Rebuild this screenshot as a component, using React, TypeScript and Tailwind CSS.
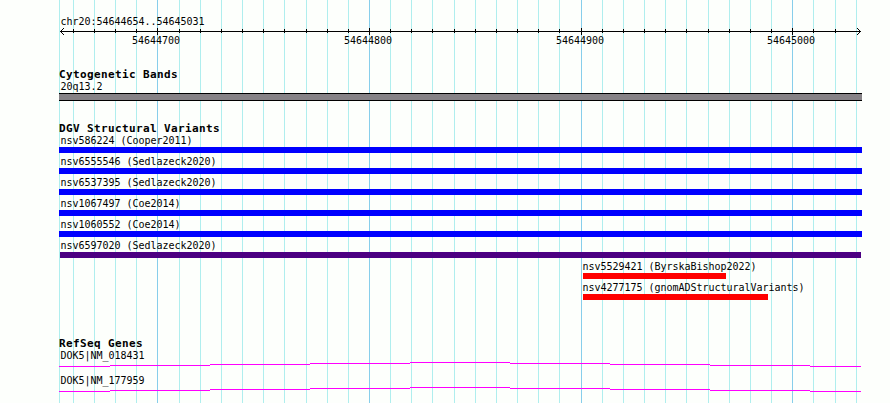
import clsx from "clsx";

interface Variant {
  name: string;
  row: string;
  bar: string;
}

const GRID = [
  59, 73, 94, 115, 136, 157, 179, 200, 221, 242, 263, 284, 306, 327, 348, 369,
  390, 411, 432, 454, 475, 496, 517, 538, 559, 581, 602, 623, 644, 665, 686,
  708, 729, 750, 771, 792, 813, 835, 856,
];

const MAJOR = [157, 369, 581, 792];

const VARIANTS: Variant[] = [
  { name: "nsv586224 (Cooper2011)", row: "ml-[59px]", bar: "w-[803px] bg-[#0000ff]" },
  { name: "nsv6555546 (Sedlazeck2020)", row: "ml-[59px]", bar: "w-[803px] bg-[#0000ff]" },
  { name: "nsv6537395 (Sedlazeck2020)", row: "ml-[59px]", bar: "w-[803px] bg-[#0000ff]" },
  { name: "nsv1067497 (Coe2014)", row: "ml-[59px]", bar: "w-[803px] bg-[#0000ff]" },
  { name: "nsv1060552 (Coe2014)", row: "ml-[59px]", bar: "w-[803px] bg-[#0000ff]" },
  { name: "nsv6597020 (Sedlazeck2020)", row: "ml-[59px]", bar: "ml-px w-[801px] bg-[#4b0082]" },
  { name: "nsv5529421 (ByrskaBishop2022)", row: "ml-[581px]", bar: "ml-[2px] w-[143px] bg-[#ff0000]" },
  { name: "nsv4277175 (gnomADStructuralVariants)", row: "ml-[581px]", bar: "ml-[2px] w-[185px] bg-[#ff0000]" },
];

const GENES = ["DOK5|NM_018431", "DOK5|NM_177959"];

function GridLines() {
  return (
    <svg className="absolute inset-0" width="890" height="403" shapeRendering="crispEdges">
      {GRID.map((x) => (
        <rect
          key={x}
          x={x}
          y={0}
          width={1}
          height={403}
          fill={MAJOR.includes(x) ? "#87ceeb" : "#afeeee"}
        />
      ))}
    </svg>
  );
}

function Ruler() {
  return (
    <svg className="block" width="890" height="8" shapeRendering="crispEdges">
      <rect x={60} y={3} width={801} height={1} />
      {GRID.slice(1, -1).map((x) =>
        MAJOR.includes(x) ? (
          <rect key={x} x={x} y={0} width={1} height={7} />
        ) : (
          <rect key={x} x={x} y={1} width={1} height={4} />
        )
      )}
      {/* arrow heads */}
      {[1, 2, 3].map((d) => (
        <g key={d}>
          <rect x={60 + d} y={3 - d} width={1} height={1} />
          <rect x={60 + d} y={3 + d} width={1} height={1} />
          <rect x={860 - d} y={3 - d} width={1} height={1} />
          <rect x={860 - d} y={3 + d} width={1} height={1} />
        </g>
      ))}
    </svg>
  );
}

function Title({ children }: { children: string }) {
  return (
    <h2 className="ml-[59px] h-3 text-[11px] leading-[14px] font-bold tracking-[0.378px]">
      {children}
    </h2>
  );
}

function Intron() {
  return (
    <svg className="block" width="890" height="5" shapeRendering="crispEdges" fill="#ff00ff">
      {[4, 3, 2, 1, 0, 1, 2, 3, 4].map((y, i) => {
        const start = i === 0 ? 59 : 10 + i * 100;
        const end = i === 8 ? 861 : 110 + i * 100;
        return <rect key={i} x={start} y={y} width={end - start} height={1} />;
      })}
    </svg>
  );
}

export default function App() {
  return (
    <div className="relative h-[403px] w-[890px] overflow-hidden bg-[#fdfffc] font-['DejaVu_Sans_Mono',monospace] text-[10px] leading-[14px] tracking-[-0.02px] whitespace-pre text-black">
      <GridLines />
      <div className="relative flex flex-col">
        <div className="h-7 pt-[15px] pl-[60.4px]">chr20:54644654..54645031</div>
        <Ruler />
        <div className="-mt-px flex h-[33px] leading-3">
          <span className="ml-[132px] w-[212px]">54644700</span>
          <span className="w-[212px]">54644800</span>
          <span className="w-[211px]">54644900</span>
          <span>54645000</span>
        </div>

        <Title>Cytogenetic Bands</Title>
        <div className="h-[13px] pl-[60.4px]">20q13.2</div>
        <div className="ml-[59px] h-2 w-[803px] border-y border-black bg-[#868286]" />

        <div className="h-[21px]" />
        <Title>DGV Structural Variants</Title>
        <div>
          {VARIANTS.map((v) => (
            <div key={v.name} className={v.row}>
              <div className="h-[13px] pl-[1.4px]">{v.name}</div>
              <div className={clsx("mb-0.5 h-1.5", v.bar)} />
            </div>
          ))}
        </div>

        <div className="h-[35px]" />
        <Title>RefSeq Genes</Title>
        {GENES.map((gene) => (
          <div key={gene} className="h-[25px]">
            <div className="h-[13px] pl-[60.4px]">{gene}</div>
            <Intron />
          </div>
        ))}
      </div>
    </div>
  );
}
